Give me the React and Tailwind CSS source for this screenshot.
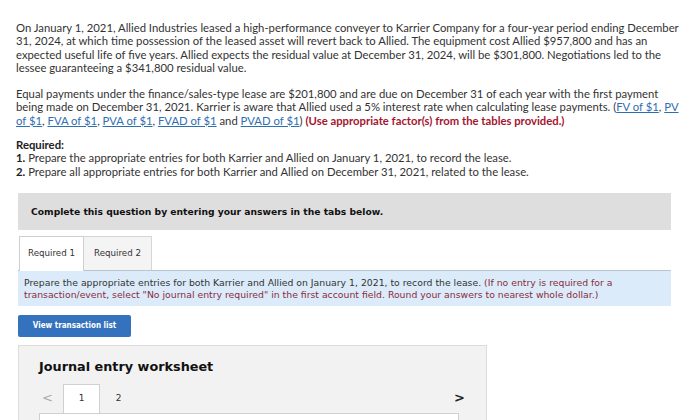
import React from "react";

const body = { fontFamily: "Lato, 'Open Sans', sans-serif" };
const verdana = { fontFamily: "'DejaVu Sans', Verdana, sans-serif" };
const tahoma = { fontFamily: "'DejaVu Sans Condensed', Tahoma, sans-serif" };

const Link = ({ children }) => (
  <a href="#" className="text-[#2f6eb0] underline underline-offset-1">
    {children}
  </a>
);

const App = () => {
  return (
    <div className="w-[700px] h-[420px] overflow-hidden bg-white pl-4 pt-[21px]" style={body}>
      <div className="w-[680px] whitespace-nowrap text-[11.3px] leading-[13.3px] text-[#333]">
        <p>
          On January 1, 2021, Allied Industries leased a high-performance conveyer to Karrier Company for a four-year period ending December
          <br />
          31, 2024, at which time possession of the leased asset will revert back to Allied. The equipment cost Allied $957,800 and has an
          <br />
          expected useful life of five years. Allied expects the residual value at December 31, 2024, will be $301,800. Negotiations led to the
          <br />
          lessee guaranteeing a $341,800 residual value.
        </p>
        <p className="mt-[13px]">
          Equal payments under the finance/sales-type lease are $201,800 and are due on December 31 of each year with the first payment
          <br />
          being made on December 31, 2021. Karrier is aware that Allied used a 5% interest rate when calculating lease payments. (
          <Link>FV of $1</Link>, <Link>PV</Link>
          <br />
          <Link>of $1</Link>, <Link>FVA of $1</Link>, <Link>PVA of $1</Link>, <Link>FVAD of $1</Link> and <Link>PVAD of $1</Link>){" "}
          <span className="font-bold text-[#a5152f]">(Use appropriate factor(s) from the tables provided.)</span>
        </p>
        <div className="mt-[11px]">
          <p className="font-bold text-[#222]">Required:</p>
          <p>
            <span className="font-bold text-[#222]">1.</span> Prepare the appropriate entries for both Karrier and
            Allied on January 1, 2021, to record the lease.
          </p>
          <p>
            <span className="font-bold text-[#222]">2.</span> Prepare all appropriate entries for both Karrier and
            Allied on December 31, 2021, related to the lease.
          </p>
        </div>
      </div>

      <div className="ml-[2px] w-[653px]" style={verdana}>
        <div className="mt-[15px] h-[37px] bg-[#dedede] flex items-center pl-[13px]">
          <span className="text-[9.2px] font-bold text-[#111]">
            Complete this question by entering your answers in the tabs below.
          </span>
        </div>

        <div className="mt-[6px] flex items-start pl-[1px]">
          <div className="relative z-10 -mb-[1px] w-[65px] h-[35px] pb-[1px] bg-white border border-b-0 border-[#cfcfcf] flex items-center justify-center text-[8.7px] text-[#333]">
            Required 1
          </div>
          <div className="w-[68px] h-[34px] bg-[#f4f4f4] border border-l-0 border-b-0 border-[#d6d6d6] flex items-center justify-center text-[8.7px] text-[#333]">
            Required 2
          </div>
        </div>

        <div className="border-t border-[#b9c4cf] bg-[#dcebf9] px-[6px] pt-[6px] pb-[5px] whitespace-nowrap text-[9.3px] leading-[12px] text-[#333]">
          Prepare the appropriate entries for both Karrier and Allied on January 1, 2021, to record the lease.{" "}
          <span className="text-[#8a2b3d]">(If no entry is required for a</span>
          <br />
          <span className="text-[#8a2b3d]">
            transaction/event, select "No journal entry required" in the first account field. Round your answers to
            nearest whole dollar.)
          </span>
        </div>

        <button
          type="button"
          className="mt-[9px] w-[113px] h-[22px] rounded-[2px] bg-[#3572bd] text-white text-[8px] font-bold flex items-center justify-center"
          style={tahoma}
        >
          View transaction list
        </button>

        <div className="mt-[8px] w-[469px] h-[90px] bg-[#f2f2f2] border border-[#dcdcdc] pl-[20px] pr-[27px] pt-[12px]">
          <h2 className="text-[12.8px] leading-[18px] font-bold text-[#111]">Journal entry worksheet</h2>
          <div className="mt-[8px] -mr-[6px] flex items-end h-[29px]">
            <span className="w-[24px] pl-[3px] pb-[9px] text-[13px] text-[#aaa] leading-none">&lt;</span>
            <div className="w-[37px] h-[29px] bg-white border border-b-0 border-[#d0d0d0] flex items-center justify-center text-[9px] text-[#333]">
              1
            </div>
            <div className="w-[37px] h-[29px] flex items-center justify-center text-[9px] text-[#333]">2</div>
            <div className="flex-1" />
            <span className="pb-[9px] text-[13px] font-bold text-[#222] leading-none">&gt;</span>
          </div>
          <div className="h-[20px] bg-white border-t border-x border-[#d0d0d0]" />
        </div>
      </div>
    </div>
  );
};

export default App;
